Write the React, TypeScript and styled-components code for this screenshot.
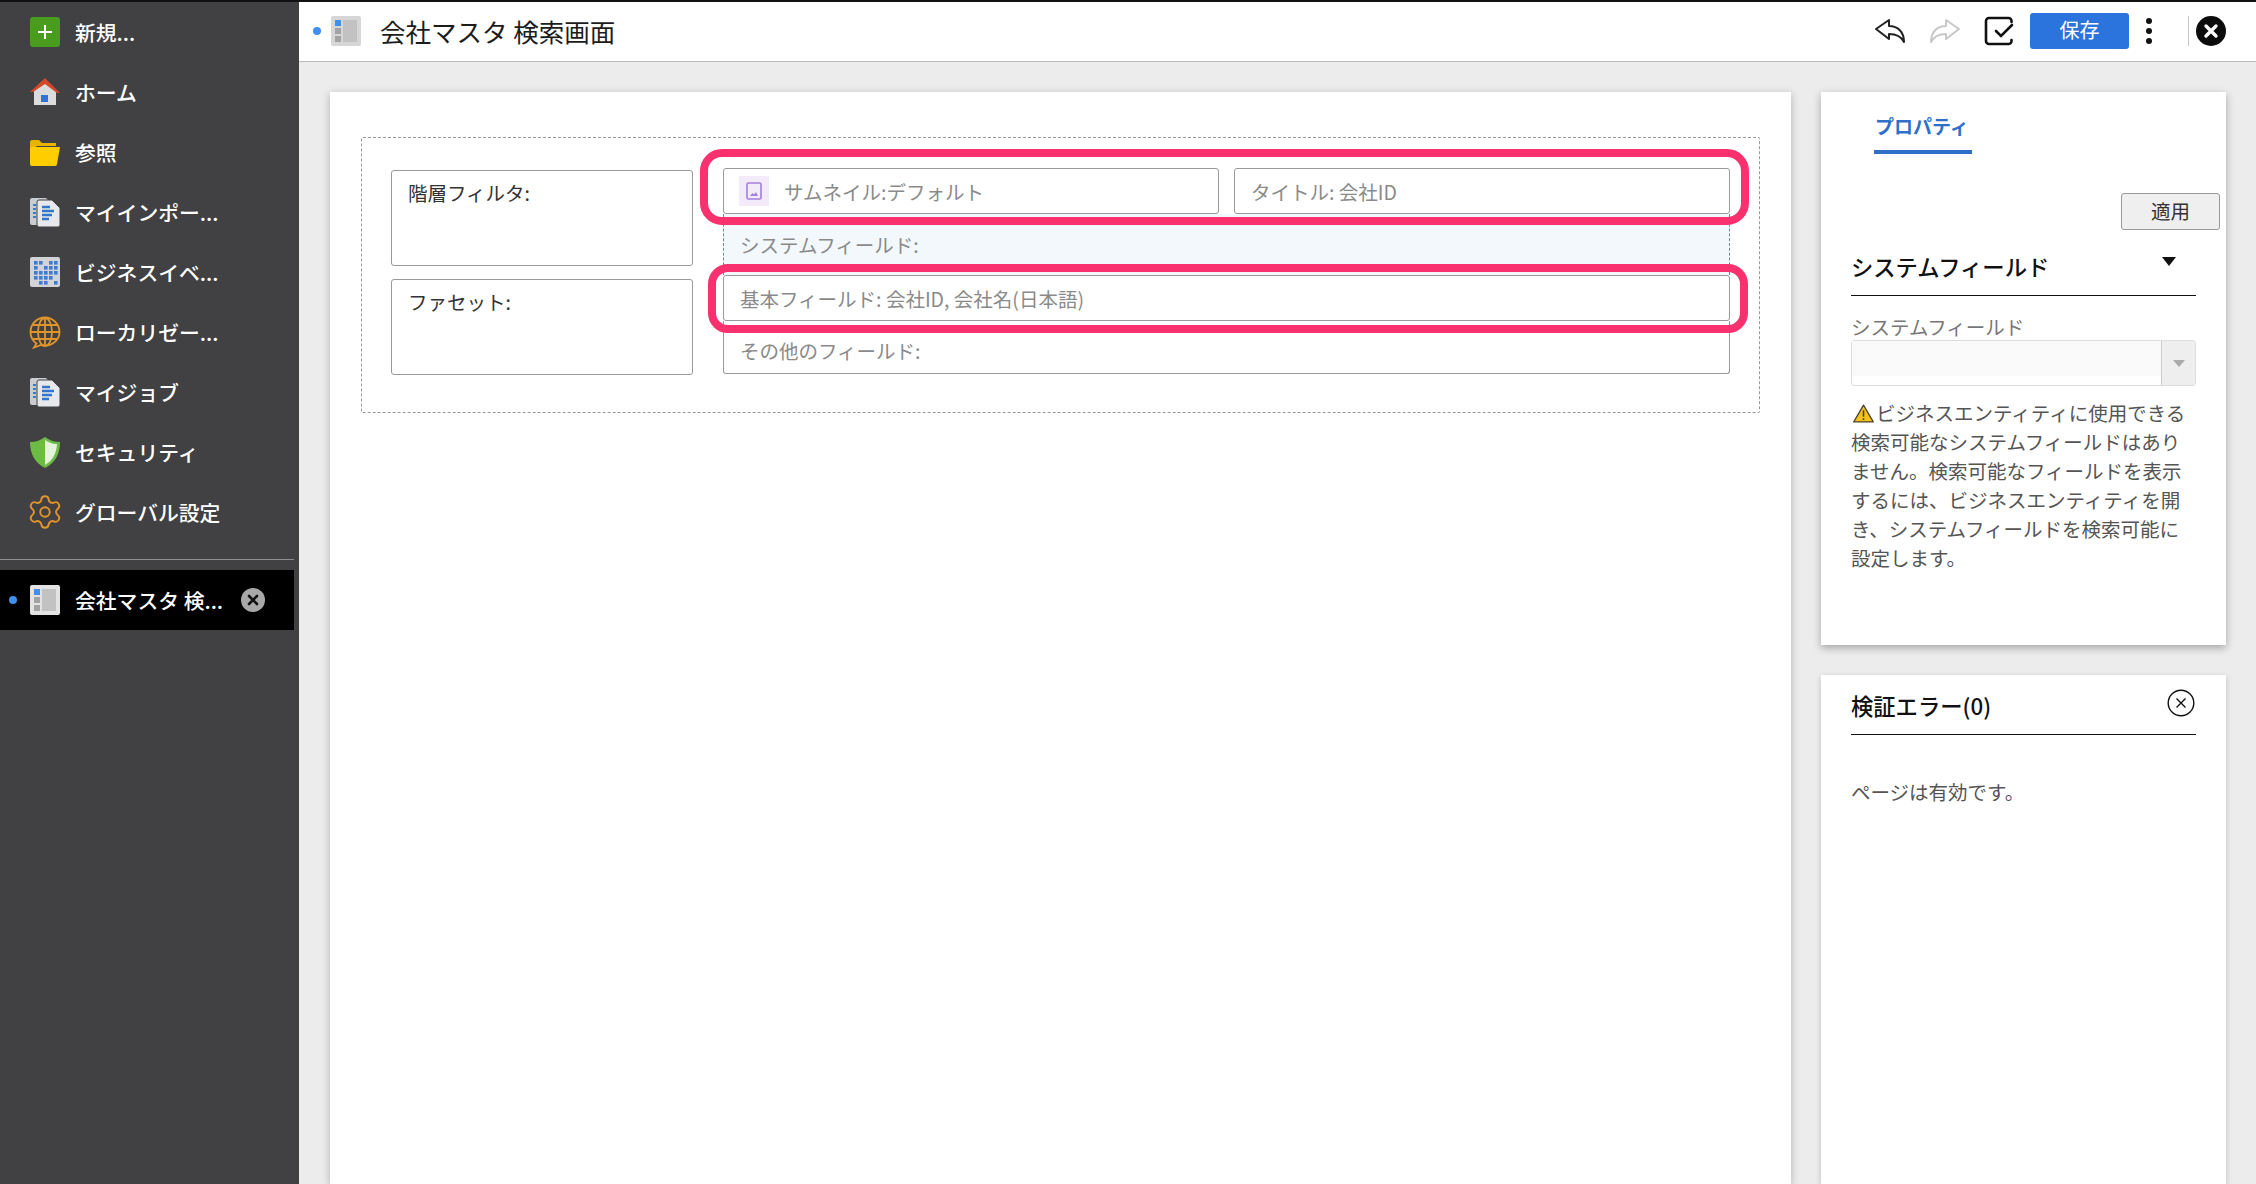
import React from 'react';
import styled, { createGlobalStyle } from 'styled-components';
import { Settings } from 'lucide-react';

const GlobalStyle = createGlobalStyle`
  html, body {
    margin: 0;
    padding: 0;
    height: 100%;
    overflow: hidden;
    font-family: "Noto Sans CJK JP", "Noto Sans", sans-serif;
  }
  * { box-sizing: border-box; }
`;

const AddIcon = () => (
  <svg width="30" height="30" viewBox="0 0 30 30">
    <rect width="30" height="30" rx="3" fill="#4a9c1e" />
    <path d="M15 8v14M8 15h14" stroke="#fff" strokeWidth="2" />
  </svg>
);

const HomeIcon = () => (
  <svg width="30" height="30" viewBox="0 0 30 30">
    <path d="M4 14 15 5l11 9v14H4z" fill="#dcdcdc" />
    <path d="M0 15 15 1l15 15h-3L15 7 3 15z" fill="#d5472a" />
    <rect x="11" y="18" width="7" height="7" fill="#3274cf" />
  </svg>
);

const FolderIcon = () => (
  <svg width="30" height="30" viewBox="0 0 30 30">
    <path d="M0 5a2 2 0 0 1 2-2h7l3 3h14v3H7L5 11 0 28z" fill="#e9b400" />
    <path d="M0 12a2 2 0 0 1 2-2h28l-3 17a2 2 0 0 1-2 2H2a2 2 0 0 1-2-2z" fill="#ffcd00" />
  </svg>
);

const DocsIcon = () => (
  <svg width="30" height="30" viewBox="0 0 30 30">
    <path d="M2 1h14l3 3v24H2a2 2 0 0 1-2-2V3a2 2 0 0 1 2-2z" fill="#c9ccd1" />
    <path d="M3 8h3M3 12h3M3 16h3M3 20h3" stroke="#3b7ad1" strokeWidth="2" />
    <path d="M9 3h13l8 8v17a2 2 0 0 1-2 2H9a2 2 0 0 1-2-2V5a2 2 0 0 1 2-2z" fill="#e6e8eb" stroke="#414042" />
    <path d="M12 10h8M12 14h12M12 18h10M12 22h7" stroke="#3274cf" strokeWidth="2.5" />
  </svg>
);

const eventCells = [
  [4, 4], [9, 4], [19, 4], [24, 4], [4, 9], [19, 9], [24, 9], [14, 9],
  [4, 14], [9, 14], [14, 14], [19, 14], [24, 14], [4, 19], [9, 19], [14, 19], [19, 19], [9, 24], [14, 24], [24, 24],
];

const EventsIcon = () => (
  <svg width="30" height="30" viewBox="0 0 30 30">
    <rect width="30" height="30" rx="2" fill="#d2d3d6" />
    {eventCells.map(([x, y]) => (
      <rect key={`${x}-${y}`} x={x} y={y} width="3.6" height="3.6" fill="#3f7bd2" />
    ))}
  </svg>
);

const GlobeIcon = () => (
  <svg width="32" height="33" viewBox="0 0 32 33" fill="none" stroke="#e0952b" strokeWidth="1.8">
    <path d="M16 1.500C8 1.500 1.500 8 1.500 16c0 5 2.500 9 6 11.500L5 31.500l7-2.500c1.300.3 2.700.5 4 .5 8 0 14.500-6 14.500-13.500S24 1.500 16 1.500z" />
    <ellipse cx="16" cy="16" rx="7" ry="14" />
    <path d="M16 2v27M2 16h28M4 9h24M4 23h24" />
  </svg>
);

const ShieldIcon = () => (
  <svg width="30" height="32" viewBox="0 0 30 32">
    <path d="M15 1C11 4 6 6 0 6c0 12 5 21 15 26z" fill="#6cbb45" />
    <path d="M15 1c4 3 9 5 15 5 0 12-5 21-15 26z" fill="#6cbb45" />
    <path d="M15 4c3 2 7 4 12 4-.5 10-5 17-12 21z" fill="#e4f3dc" />
  </svg>
);

const LayoutIcon = ({ $muted }: { $muted?: boolean }) => (
  <svg width="30" height="30" viewBox="0 0 30 30">
    <rect width="30" height="30" rx="2" fill={$muted ? '#d6d6d6' : '#e3e3e3'} />
    <rect x="4" y="4" width="6" height="6" fill="#3f8fee" />
    <rect x="4" y="12" width="6" height="6" fill="#a3a3a3" />
    <rect x="4" y="20" width="6" height="6" fill="#a3a3a3" />
    <rect x="12" y="4" width="14" height="22" fill="#c2c2c2" />
  </svg>
);

const UndoIcon = ({ color }: { color: string }) => (
  <svg width="30" height="26" viewBox="0 0 30 26" fill="none" stroke={color} strokeWidth="2" strokeLinejoin="round" strokeLinecap="round">
    <path d="M1 11 14 2v6c9 0 15 6 15 16-3-6-8-8-15-8v5z" />
  </svg>
);

const RedoIcon = ({ color }: { color: string }) => (
  <svg width="30" height="26" viewBox="0 0 30 26" fill="none" stroke={color} strokeWidth="2" strokeLinejoin="round" strokeLinecap="round">
    <path d="M29 11 16 2v6C7 8 1 14 1 24c3-6 8-8 15-8v5z" />
  </svg>
);

const CheckBoxIcon = () => (
  <svg width="30" height="30" viewBox="0 0 30 30" fill="none" stroke="#111" strokeLinecap="round">
    <path d="M27.500 6V5a3 3 0 0 0-3-3H5a3 3 0 0 0-3 3v20a3 3 0 0 0 3 3h19.500a3 3 0 0 0 3-3v-1" strokeWidth="2.600" />
    <path d="m12 15 5 5 11-11" strokeWidth="2.600" />
  </svg>
);

const CloseDark = () => (
  <svg width="30" height="30" viewBox="0 0 30 30">
    <circle cx="15" cy="15" r="15" fill="#0c0c0c" />
    <path d="m10 10 10 10M20 10 10 20" stroke="#fff" strokeWidth="3.400" strokeLinecap="round" />
  </svg>
);

const CloseGrey = () => (
  <svg width="24" height="24" viewBox="0 0 24 24">
    <circle cx="12" cy="12" r="12" fill="#a8a8a8" />
    <path d="m8 8 8 8M16 8l-8 8" stroke="#111" strokeWidth="2.600" strokeLinecap="round" />
  </svg>
);

const CloseOutline = () => (
  <svg width="28" height="28" viewBox="0 0 28 28" fill="none" stroke="#111">
    <circle cx="14" cy="14" r="12.800" strokeWidth="1.400" />
    <path d="m9.500 9.500 9 9M18.500 9.500l-9 9" strokeWidth="1.400" />
  </svg>
);

const ThumbIcon = () => (
  <svg width="16" height="18" viewBox="0 0 16 18" fill="none">
    <rect x="1" y="1" width="14" height="16" rx="1.500" stroke="#a57fdc" strokeWidth="1.600" />
    <path d="m4 14 2.500-3 1.500 1.500L10 10l2 4z" fill="#a57fdc" />
  </svg>
);

const WarningIcon = () => (
  <WarningSvg width="21" height="19" viewBox="0 0 20 18">
    <path d="M10 1 19.300 17H.7z" fill="#f3c21b" stroke="#4a4030" strokeWidth="1.200" strokeLinejoin="round" />
    <path d="M10 6v6M10 13.500v1.600" stroke="#4a4030" strokeWidth="1.500" />
  </WarningSvg>
);

const navItems = [
  { label: '新規...', icon: <AddIcon /> },
  { label: 'ホーム', icon: <HomeIcon /> },
  { label: '参照', icon: <FolderIcon /> },
  { label: 'マイインポー...', icon: <DocsIcon /> },
  { label: 'ビジネスイベ...', icon: <EventsIcon /> },
  { label: 'ローカリゼー...', icon: <GlobeIcon /> },
  { label: 'マイジョブ', icon: <DocsIcon /> },
  { label: 'セキュリティ', icon: <ShieldIcon /> },
  { label: 'グローバル設定', icon: <Settings size={38} color="#e0952b" strokeWidth={1.2} /> },
];

export default function App() {
  return (
    <Page>
      <GlobalStyle />
      <Sidebar>
        {navItems.map((item) => (
          <NavItem key={item.label}>
            <NavIcon>{item.icon}</NavIcon>
            <NavLabel>{item.label}</NavLabel>
          </NavItem>
        ))}
        <SideDivider />
        <ActiveItem>
          <Dot />
          <LayoutIcon />
          <NavLabel>会社マスタ 検...</NavLabel>
          <ActiveClose>
            <CloseGrey />
          </ActiveClose>
        </ActiveItem>
      </Sidebar>

      <Main>
        <TopBar>
          <Dot $tight />
          <LayoutIcon $muted />
          <Title>会社マスタ 検索画面</Title>
          <TopActions>
            <UndoIcon color="#222" />
            <RedoButton>
              <RedoIcon color="#c8c8c8" />
            </RedoButton>
            <CheckButton>
              <CheckBoxIcon />
            </CheckButton>
            <SaveButton>保存</SaveButton>
            <Kebab>
              <i />
              <i />
              <i />
            </Kebab>
            <VDivider />
            <CloseDark />
          </TopActions>
        </TopBar>

        <Content>
          <Canvas>
            <DashedBox>
              <LeftColumn>
                <ZoneBox>階層フィルタ:</ZoneBox>
                <ZoneBox>ファセット:</ZoneBox>
              </LeftColumn>
              <RightColumn>
                <HeaderRow>
                  <FieldBox>
                    <ThumbBadge>
                      <ThumbIcon />
                    </ThumbBadge>
                    サムネイル:デフォルト
                  </FieldBox>
                  <FieldBox>タイトル: 会社ID</FieldBox>
                </HeaderRow>
                <SystemRow>システムフィールド:</SystemRow>
                <BasicField>基本フィールド: 会社ID, 会社名(日本語)</BasicField>
                <OtherRow>その他のフィールド:</OtherRow>
              </RightColumn>
              <HighlightTop />
              <HighlightBottom />
            </DashedBox>
          </Canvas>

          <SidePanels>
            <PropertyPanel>
              <TabRow>
                <Tab>プロパティ</Tab>
              </TabRow>
              <ApplyRow>
                <ApplyButton>適用</ApplyButton>
              </ApplyRow>
              <PanelBody>
                <SectionHead>
                  システムフィールド
                  <Caret />
                </SectionHead>
                <FieldLabel>システムフィールド</FieldLabel>
                <SelectBox>
                  <SelectInput />
                  <SelectArrow>
                    <GreyCaret />
                  </SelectArrow>
                </SelectBox>
                <Notice>
                  <WarningIcon />
                  ビジネスエンティティに使用できる
                  <br />
                  検索可能なシステムフィールドはあり
                  <br />
                  ません。検索可能なフィールドを表示
                  <br />
                  するには、ビジネスエンティティを開
                  <br />
                  き、システムフィールドを検索可能に
                  <br />
                  設定します。
                </Notice>
              </PanelBody>
            </PropertyPanel>

            <ErrorPanel>
              <SectionHead $error>
                検証エラー(0)
                <ErrorClose>
                  <CloseOutline />
                </ErrorClose>
              </SectionHead>
              <ValidText>ページは有効です。</ValidText>
            </ErrorPanel>
          </SidePanels>
        </Content>
      </Main>
    </Page>
  );
}

const Page = styled.div`
  display: flex;
  width: 2256px;
  height: 1184px;
  overflow: hidden;
  border-top: 2px solid #111;
  background: #ececec;
`;

const Sidebar = styled.nav`
  flex: 0 0 299px;
  display: flex;
  flex-direction: column;
  background: #414042;
`;

const NavItem = styled.div`
  display: flex;
  align-items: center;
  height: 60px;
  padding-left: 30px;
`;

const NavIcon = styled.span`
  display: flex;
  align-items: center;
  justify-content: center;
  width: 30px;
  height: 34px;

  svg {
    flex: none;
  }
`;

const NavLabel = styled.span`
  margin-left: 15px;
  color: #fff;
  font-size: 20.8px;
  font-weight: 500;
  white-space: nowrap;
`;

const SideDivider = styled.div`
  width: 294px;
  height: 1px;
  margin-top: 17px;
  background: #8e8e8e;
`;

const ActiveItem = styled.div`
  position: relative;
  display: flex;
  align-items: center;
  width: 294px;
  height: 60px;
  margin-top: 10px;
  padding-left: 9px;
  background: #000;
`;

const ActiveClose = styled.span`
  display: flex;
  margin-left: auto;
  margin-right: 29px;
`;

const Dot = styled.span<{ $tight?: boolean }>`
  flex: none;
  width: 8px;
  height: 8px;
  margin-right: ${(props) => (props.$tight ? '10px' : '13px')};
  border-radius: 50%;
  background: #3f8fee;
`;

const Main = styled.div`
  flex: 1;
  display: flex;
  flex-direction: column;
  min-width: 0;
`;

const TopBar = styled.header`
  flex: 0 0 60px;
  display: flex;
  align-items: center;
  padding: 0 30px 2px 14px;
  background: #fff;
  border-bottom: 1px solid #bbb;
`;

const Title = styled.h1`
  margin: 0 0 0 19px;
  color: #1c1c1c;
  font-size: 25.5px;
  font-weight: 400;
`;

const TopActions = styled.div`
  display: flex;
  align-items: center;
  margin-left: auto;
`;

const RedoButton = styled.span`
  display: flex;
  margin-left: 25px;
`;

const CheckButton = styled.span`
  display: flex;
  margin-left: 24px;
`;

const SaveButton = styled.button`
  width: 99px;
  height: 36px;
  margin-left: 16px;
  padding: 0 0 2px;
  border: none;
  border-radius: 3px;
  background: #2b74de;
  color: #fff;
  font-family: inherit;
  font-size: 20px;
`;

const Kebab = styled.span`
  display: flex;
  flex-direction: column;
  gap: 4px;
  margin-left: 17px;

  i {
    width: 6px;
    height: 6px;
    border-radius: 50%;
    background: #111;
  }
`;

const VDivider = styled.span`
  width: 1px;
  height: 30px;
  margin: 0 7px 0 36px;
  background: #c4c4c4;
`;

const Content = styled.div`
  flex: 1;
  display: flex;
  gap: 30px;
  padding: 30px 30px 0 31px;
  min-height: 0;
`;

const Canvas = styled.section`
  flex: 0 0 1461px;
  padding: 45px 31px 0;
  background: #fff;
  box-shadow: 0 2px 8px rgba(0, 0, 0, 0.25);
`;

const DashedBox = styled.div`
  position: relative;
  display: flex;
  gap: 30px;
  width: 1399px;
  height: 276px;
  padding: 30px 30px 0 29px;
  border: 1px dashed #999;
  border-radius: 2px;
`;

const LeftColumn = styled.div`
  flex: 0 0 302px;
  display: flex;
  flex-direction: column;
  gap: 13px;
  padding-top: 2px;
`;

const ZoneBox = styled.div`
  height: 96px;
  padding: 8px 16px;
  border: 1px solid #999;
  border-radius: 3px;
  color: #333;
  font-size: 19.5px;
  line-height: 28px;
`;

const RightColumn = styled.div`
  flex: 0 0 1007px;
  display: flex;
  flex-direction: column;
`;

const HeaderRow = styled.div`
  display: flex;
  gap: 15px;
`;

const FieldBox = styled.div`
  flex: 1;
  display: flex;
  align-items: center;
  height: 46px;
  padding: 0 16px;
  border: 1px solid #999;
  border-radius: 3px;
  color: #8a8a8a;
  font-size: 19.5px;
  white-space: nowrap;
`;

const BasicField = styled(FieldBox)`
  flex: none;
`;

const ThumbBadge = styled.span`
  display: flex;
  align-items: center;
  justify-content: center;
  width: 30px;
  height: 30px;
  margin: 0 15px 0 -1px;
  background: #f3ebfa;
`;

const SystemRow = styled.div`
  display: flex;
  align-items: center;
  height: 61px;
  padding: 0 16px 1px;
  border-left: 1px dashed #6a8a9c;
  border-right: 1px dashed #6a8a9c;
  background: #f3f8fc;
  color: #8a8a8a;
  font-size: 19.5px;
`;

const OtherRow = styled.div`
  display: flex;
  align-items: center;
  height: 53px;
  padding: 7px 16px 0;
  border: 1px solid #999;
  border-top: none;
  border-radius: 0 0 3px 3px;
  color: #8a8a8a;
  font-size: 19.5px;
`;

const HighlightTop = styled.div`
  position: absolute;
  left: 338px;
  top: 11px;
  width: 1049px;
  height: 76px;
  border: 8px solid #f9326f;
  border-radius: 22px;
  pointer-events: none;
`;

const HighlightBottom = styled.div`
  position: absolute;
  left: 346px;
  top: 126px;
  width: 1040px;
  height: 69px;
  border: 8px solid #f9326f;
  border-radius: 20px;
  pointer-events: none;
`;

const SidePanels = styled.aside`
  flex: 0 0 405px;
  display: flex;
  flex-direction: column;
  gap: 30px;
`;

const PropertyPanel = styled.section`
  flex: 0 0 553px;
  position: relative;
  background: #fff;
  box-shadow: 0 3px 8px rgba(0, 0, 0, 0.3);
`;

const TabRow = styled.div`
  display: flex;
  padding: 18px 0 0 53px;
`;

const Tab = styled.div`
  padding: 0 3px 8px 1px;
  border-bottom: 4px solid #2f6fc9;
  color: #2f6fc9;
  font-size: 19px;
  font-weight: 700;
  line-height: 32px;
`;

const ApplyRow = styled.div`
  display: flex;
  justify-content: flex-end;
  padding: 39px 6px 0 0;
`;

const ApplyButton = styled.button`
  width: 99px;
  height: 37px;
  padding: 0 0 2px;
  border: 1px solid #999;
  border-radius: 3px;
  background: #efefef;
  color: #333;
  font-family: inherit;
  font-size: 19.5px;
`;

const PanelBody = styled.div`
  padding: 0 30px;
`;

const SectionHead = styled.div<{ $error?: boolean }>`
  position: relative;
  display: flex;
  align-items: center;
  height: ${(props) => (props.$error ? '60px' : '66px')};
  margin: 0 ${(props) => (props.$error ? '30px' : '0')};
  padding-top: ${(props) => (props.$error ? '0' : '7px')};
  border-bottom: 1px solid #111;
  color: #111;
  font-size: 22.3px;
  font-weight: 500;
`;

const Caret = styled.span`
  position: absolute;
  right: 20px;
  top: 27px;
  width: 0;
  height: 0;
  border-left: 7px solid transparent;
  border-right: 7px solid transparent;
  border-top: 9px solid #111;
`;

const ErrorClose = styled.span`
  position: absolute;
  right: 1px;
  top: 14px;
  display: flex;
`;

const FieldLabel = styled.div`
  margin-top: 17px;
  color: #777;
  font-size: 19.5px;
  line-height: 27px;
`;

const SelectBox = styled.div`
  display: flex;
  height: 46px;
  border: 1px solid #ddd;
  border-radius: 3px;
`;

const SelectInput = styled.div`
  flex: 1;
  height: 35px;
  background: #fafafa;
`;

const SelectArrow = styled.div`
  flex: 0 0 34px;
  display: flex;
  align-items: center;
  justify-content: center;
  border-left: 1px solid #ccc;
  background: #eee;
`;

const GreyCaret = styled.span`
  width: 0;
  height: 0;
  border-left: 6px solid transparent;
  border-right: 6px solid transparent;
  border-top: 7px solid #aaa;
`;

const Notice = styled.p`
  margin: 12px 0 0;
  color: #555;
  font-size: 19.5px;
  line-height: 29px;
  white-space: nowrap;
`;

const WarningSvg = styled.svg`
  margin: 0 2px 0 2px;
  vertical-align: -2px;
`;

const ErrorPanel = styled.section`
  flex: 1;
  background: #fff;
  box-shadow: 0 2px 6px rgba(0, 0, 0, 0.2);
`;

const ValidText = styled.p`
  margin: 43px 30px 0;
  color: #555;
  font-size: 19.5px;
  line-height: 28px;
`;
